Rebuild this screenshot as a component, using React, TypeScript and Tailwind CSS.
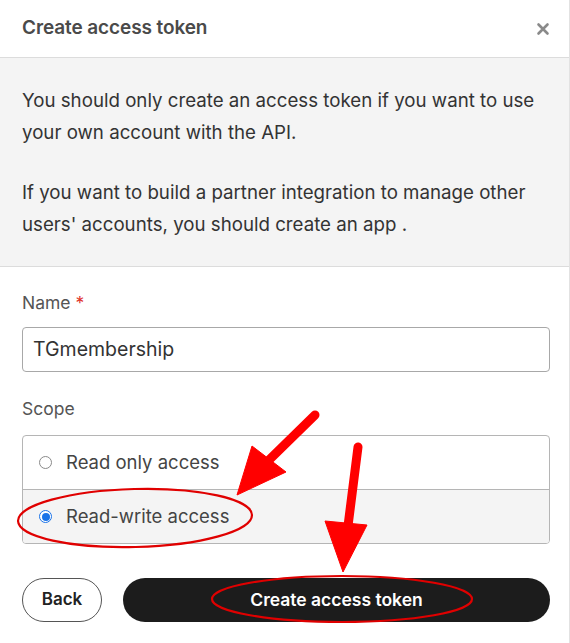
import React from "react";

export default function App() {
  return (
    <div
      className="relative w-[570px] h-[643px] bg-white border-r border-[#e2e2e2] overflow-hidden"
      style={{ fontFamily: "Inter, 'Noto Sans', sans-serif" }}
    >
      <div className="h-[58px] pl-[22px] pr-[19px] flex items-center justify-between border-b border-[#dcdcdc]">
        <div className="text-[19px] font-semibold text-[#4a4a4a] tracking-[-0.1px]">Create access token</div>
        <svg width="14" height="14" viewBox="0 0 14 14">
          <path d="M2.5 2.5 L11.5 11.5 M11.5 2.5 L2.5 11.5" stroke="#8a8a8a" strokeWidth="2.6" strokeLinecap="round" />
        </svg>
      </div>
      <div className="bg-[#f4f4f4] pl-[22px] pr-[19px] pt-[27px] pb-[26px] border-b border-[#dcdcdc] text-[18.7px] leading-[31.5px] text-[#333]">
        <p>You should only create an access token if you want to use your own account with the API.</p>
        <p className="mt-[29px]">If you want to build a partner integration to manage other users' accounts, you should create an app .</p>
      </div>
      <div className="pl-[22px] pr-[19px] pt-[26px]">
        <div className="text-[17.5px] leading-[20px] text-[#555]">
          Name <span className="text-[#e0342c]">*</span>
        </div>
        <div className="mt-[14px] h-[45px] border border-[#a8a8a8] rounded-[4px] flex items-center px-[10px] text-[19.5px] text-[#333]">
          TGmembership
        </div>
        <div className="mt-[27px] text-[17.5px] leading-[20px] text-[#555]">Scope</div>
        <div className="mt-[16px] border border-[#b5b5b5] rounded-[4px] overflow-hidden">
          <div className="h-[54px] flex items-center pl-[16px] border-b border-[#b5b5b5]">
            <span className="w-[13px] h-[13px] rounded-full border border-[#8a8a8a] bg-white" />
            <span className="ml-[14px] text-[18.5px] text-[#444]">Read only access</span>
          </div>
          <div className="h-[53px] flex items-center pl-[16px] bg-[#f4f4f4]">
            <span className="w-[13px] h-[13px] rounded-full border-[1.5px] border-[#1a73e8] bg-white flex items-center justify-center">
              <span className="w-[8px] h-[8px] rounded-full bg-[#1a73e8]" />
            </span>
            <span className="ml-[14px] text-[18.5px] text-[#444]">Read-write access</span>
          </div>
        </div>
        <div className="mt-[34px] flex gap-[21px]">
          <button className="w-[80px] h-[44px] rounded-full border border-[#555] bg-white text-[17px] font-semibold text-[#222]">
            Back
          </button>
          <button className="flex-1 h-[44px] rounded-full bg-[#1c1c1c] text-[17.5px] font-semibold text-white">
            Create access token
          </button>
        </div>
      </div>
      <svg className="absolute inset-0 pointer-events-none" width="570" height="643" viewBox="0 0 570 643">
        <g fill="#ff0000" stroke="#ff0000">
          <line x1="315" y1="415" x2="268" y2="461" strokeWidth="9" strokeLinecap="round" />
          <polygon points="252,446 286,472 237,495" strokeWidth="1" />
          <line x1="358" y1="447" x2="348" y2="526" strokeWidth="9" strokeLinecap="round" />
          <polygon points="325,521 367,525 343,572" strokeWidth="1" />
        </g>
        <ellipse cx="135" cy="518" rx="117" ry="29" fill="none" stroke="#e00000" strokeWidth="2.2" transform="rotate(-1.5 135 518)" />
        <ellipse cx="342" cy="599" rx="130" ry="23" fill="none" stroke="#e00000" strokeWidth="2.2" />
      </svg>
    </div>
  );
}
